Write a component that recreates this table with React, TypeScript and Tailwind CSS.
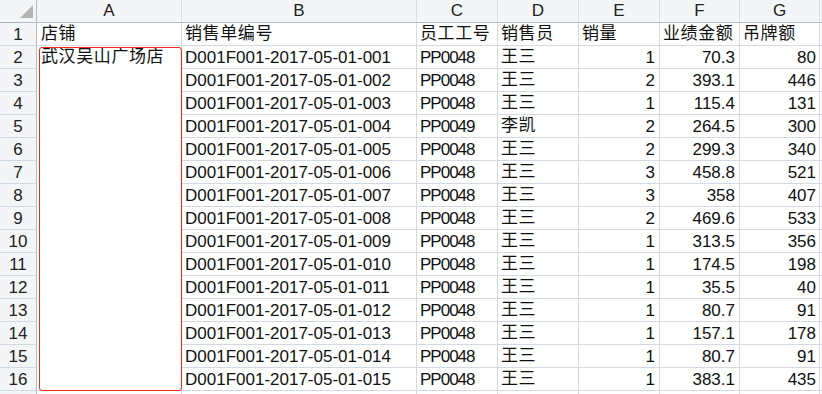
import React from "react";

const rows: [string, string, string, string, string, string][] = [
  ["D001F001-2017-05-01-001", "PP0048", "王三", "1", "70.3", "80"],
  ["D001F001-2017-05-01-002", "PP0048", "王三", "2", "393.1", "446"],
  ["D001F001-2017-05-01-003", "PP0048", "王三", "1", "115.4", "131"],
  ["D001F001-2017-05-01-004", "PP0049", "李凯", "2", "264.5", "300"],
  ["D001F001-2017-05-01-005", "PP0048", "王三", "2", "299.3", "340"],
  ["D001F001-2017-05-01-006", "PP0048", "王三", "3", "458.8", "521"],
  ["D001F001-2017-05-01-007", "PP0048", "王三", "3", "358", "407"],
  ["D001F001-2017-05-01-008", "PP0048", "王三", "2", "469.6", "533"],
  ["D001F001-2017-05-01-009", "PP0048", "王三", "1", "313.5", "356"],
  ["D001F001-2017-05-01-010", "PP0048", "王三", "1", "174.5", "198"],
  ["D001F001-2017-05-01-011", "PP0048", "王三", "1", "35.5", "40"],
  ["D001F001-2017-05-01-012", "PP0048", "王三", "1", "80.7", "91"],
  ["D001F001-2017-05-01-013", "PP0048", "王三", "1", "157.1", "178"],
  ["D001F001-2017-05-01-014", "PP0048", "王三", "1", "80.7", "91"],
  ["D001F001-2017-05-01-015", "PP0048", "王三", "1", "383.1", "435"],
];

const cell = "h-[23px] border-r border-b border-[#d5d9e3] bg-white overflow-hidden whitespace-nowrap";
const latin = "text-[17px] leading-[20px] pt-[2px]";
const cjk = "text-[17px] leading-[20px] pt-[1px] tracking-[0.6px]";
const rowHead =
  "h-[23px] border-r border-b border-r-[#b4b9c6] border-b-[#d5d9e3] bg-[#f4f5f7] flex justify-center overflow-hidden text-[17px] leading-[20px] pt-[2px] text-[#222]";
const colHead =
  "h-[23px] border-r border-b border-r-[#d9dbe0] border-b-[#b4b9c6] bg-[#f4f5f7] flex justify-center text-[17px] leading-[20px] pt-[1px] text-[#222]";

export default function App() {
  return (
    <div
      className="relative w-[822px] h-[394px] overflow-hidden bg-white text-[#111]"
      style={{ fontFamily: '"Liberation Sans", "Noto Sans CJK SC", sans-serif' }}
    >
      <div className="grid grid-cols-[37px_145px_235px_81px_81px_81px_80px_80px_1fr]">
        {/* header row */}
        <div className="h-[23px] border-r border-b border-r-[#b4b9c6] border-b-[#b4b9c6] bg-[#f4f5f7] relative">
          <svg className="absolute left-[20px] top-[5px]" width="13" height="13" viewBox="0 0 13 13">
            <polygon points="13,0 13,13 0,13" fill="#b3b3b3" />
          </svg>
        </div>
        {["A", "B", "C", "D", "E", "F", "G"].map((l) => (
          <div key={l} className={colHead}>
            {l}
          </div>
        ))}
        <div className="h-[23px] border-b border-b-[#b4b9c6] bg-[#f4f5f7]" />

        {/* row 1 */}
        <div className={rowHead}>1</div>
        <div className={`${cell} ${cjk} pl-[4px]`}>店铺</div>
        <div className={`${cell} ${cjk} pl-[3px]`}>销售单编号</div>
        <div className={`${cell} ${cjk} pl-[3px]`}>员工工号</div>
        <div className={`${cell} ${cjk} pl-[3px]`}>销售员</div>
        <div className={`${cell} ${cjk} pl-[3px]`}>销量</div>
        <div className={`${cell} ${cjk} pl-[3px]`}>业绩金额</div>
        <div className={`${cell} ${cjk} pl-[3px]`}>吊牌额</div>
        <div className="h-[23px] border-b border-[#d5d9e3]" />

        {rows.map((r, i) => (
          <React.Fragment key={i}>
            <div className={rowHead}>{i + 2}</div>
            {i === 0 && (
              <div className="row-span-15 border-r border-b border-[#d5d9e3] bg-white text-[17px] leading-[20px] pt-[1px] pl-[4px] tracking-[0.6px] whitespace-nowrap">
                武汉吴山广场店
              </div>
            )}
            <div className={`${cell} ${latin} pl-[3px]`}>{r[0]}</div>
            <div className={`${cell} ${latin} pl-[3px] tracking-[-1px]`}>{r[1]}</div>
            <div className={`${cell} ${cjk} pl-[3px]`}>{r[2]}</div>
            <div className={`${cell} ${latin} pr-[4px] text-right`}>{r[3]}</div>
            <div className={`${cell} ${latin} pr-[4px] text-right`}>{r[4]}</div>
            <div className={`${cell} ${latin} pr-[3px] text-right`}>{r[5]}</div>
            <div className="h-[23px] border-b border-[#d5d9e3]" />
          </React.Fragment>
        ))}

        {/* row 17 partial (only its top edge is visible) */}
        <div className={rowHead} />
        <div className={cell} />
        <div className={cell} />
        <div className={cell} />
        <div className={cell} />
        <div className={cell} />
        <div className={cell} />
        <div className={cell} />
        <div className="h-[23px] border-b border-[#d5d9e3]" />
      </div>

      {/* selection box over merged A2:A16 */}
      <div className="absolute left-[39px] top-[47px] w-[143px] h-[344px] border-[1.5px] border-[#f4271c] rounded-[3px] pointer-events-none" />
    </div>
  );
}
